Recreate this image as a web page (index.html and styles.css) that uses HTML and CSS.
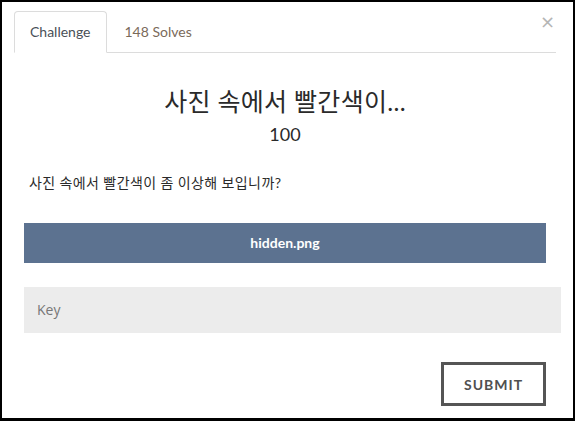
FILE: index.html
```html
<!DOCTYPE html>
<html lang="ko">
<head>
<meta charset="utf-8">
<link rel="stylesheet" href="styles.css">
</head>
<body>
<div class="frame">
  <button class="close" aria-label="Close">×</button>
  <nav class="tabs">
    <a class="tab active">Challenge</a>
    <a class="tab">148 Solves</a>
  </nav>
  <h2 class="title">사진 속에서 빨간색이...</h2>
  <h3 class="value">100</h3>
  <p class="desc">사진 속에서 빨간색이 좀 이상해 보입니까?</p>
  <div class="files">
    <a class="file">hidden.png</a>
  </div>
  <div class="key">Key</div>
  <div class="actions">
    <button class="submit">SUBMIT</button>
  </div>
</div>
</body>
</html>
```
FILE: styles.css
```css
html, body {
  margin: 0;
  padding: 0;
  background: #fff;
}
.frame {
  position: relative;
  width: 575px;
  height: 421px;
  box-sizing: border-box;
  border: 2px solid #000;
  border-bottom-width: 3px;
  padding: 9px 17px 0 12px;
  font-family: Lato, "Noto Sans CJK KR", sans-serif;
  color: #333;
}
.close {
  position: absolute;
  top: 9px;
  right: 18px;
  border: 0;
  background: none;
  padding: 0;
  font-family: "DejaVu Sans", sans-serif;
  font-size: 18px;
  line-height: 22px;
  color: #b5b5b5;
}
.tabs {
  display: flex;
  border-bottom: 1px solid #dcdcdc;
  height: 41px;
}
.tab {
  display: block;
  box-sizing: border-box;
  height: 42px;
  padding: 0 15px;
  margin-right: 2px;
  line-height: 40px;
  font-size: 14px;
  color: #7a6a5a;
  border: 1px solid transparent;
  border-radius: 4px 4px 0 0;
}
.tab.active {
  color: #495057;
  border-color: #dcdcdc #dcdcdc #fff;
  background: #fff;
}
.tab + .tab {
  padding-left: 15px;
}
.title {
  margin: 34px 0 0;
  text-align: center;
  font-weight: 400;
  font-size: 25px;
  letter-spacing: 0.3px;
  line-height: 28px;
  color: #2a2a2a;
}
.value {
  margin: 8px 0 0;
  text-align: center;
  font-weight: 400;
  font-size: 18px;
  line-height: 22px;
  color: #2a2a2a;
}
.desc {
  margin: 28px 0 0 15px;
  font-size: 14px;
  letter-spacing: 0.4px;
  line-height: 20px;
  color: #2a2a2a;
}
.files {
  margin: 30px 10px 0;
}
.file {
  display: block;
  height: 40px;
  line-height: 40px;
  background: #5c7290;
  color: #fff;
  font-weight: 700;
  font-size: 14px;
  text-align: center;
}
.key {
  margin: 24px -5px 0 10px;
  height: 46px;
  box-sizing: border-box;
  padding: 0 13px;
  line-height: 46px;
  background: #ececec;
  font-family: "Open Sans", sans-serif;
  font-size: 14px;
  color: #777;
}
.actions {
  display: flex;
  justify-content: flex-end;
  margin: 29px 10px 0;
}
.submit {
  width: 105px;
  height: 44px;
  box-sizing: border-box;
  border: 3px solid #555;
  background: #fff;
  font-family: Lato, sans-serif;
  font-weight: 700;
  font-size: 14px;
  letter-spacing: 1px;
  color: #505050;
  padding: 0;
}
```
